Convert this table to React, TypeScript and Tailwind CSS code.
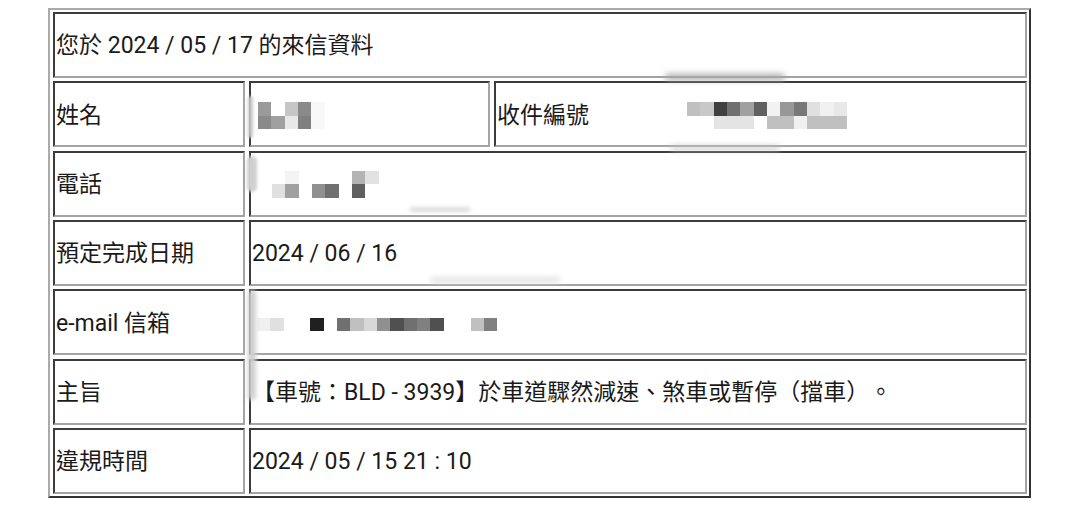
import React from "react";

// pixelated redaction blocks, one class per square ("" = empty)
const nameBlocks: string[][] = [
    ["bg-[#9a9a9a]", "", "bg-[#c6c6c6]", "bg-[#8a8a8a]", "bg-[#f8f8f8]"],
    ["bg-[#8a8a8a]", "bg-[#a0a0a0]", "bg-[#e8e8e8]", "bg-[#808080]", "bg-[#f8f8f8]"],
];

const receiptBlocks: string[][] = [
    ["bg-[#c0c0c0]", "bg-[#c8c8c8]", "bg-[#404040]", "bg-[#707070]", "bg-[#a0a0a0]", "bg-[#606060]", "bg-[#f2f2f2]", "bg-[#989898]", "bg-[#787878]", "bg-[#e0e0e0]", "bg-[#f0f0f0]", "bg-[#e8e8e8]"],
    ["", "", "bg-[#e4e4e4]", "bg-[#e4e4e4]", "bg-[#e4e4e4]", "", "bg-[#c0c0c0]", "bg-[#c0c0c0]", "bg-[#f0f0f0]", "bg-[#c0c0c0]", "bg-[#c0c0c0]", "bg-[#c0c0c0]"],
];

const phoneBlocks: string[][] = [
    ["", "bg-[#f4f4f4]", "", "", "", "", "bg-[#b4b4b4]", "bg-[#e2e2e2]"],
    ["bg-[#e0e0e0]", "bg-[#a0a0a0]", "", "bg-[#909090]", "bg-[#707070]", "", "bg-[#606060]", ""],
];

const emailBlocks: string[][] = [
    ["bg-[#f0f0f0]", "bg-[#e0e0e0]", "", "", "bg-[#202020]", "", "bg-[#707070]", "bg-[#c0c0c0]", "bg-[#d8d8d8]", "bg-[#909090]", "bg-[#505050]", "bg-[#707070]", "bg-[#808080]", "bg-[#505050]", "", "", "bg-[#c0c0c0]", "bg-[#808080]"],
];

const Redacted: React.FC<{ rows: string[][] }> = ({ rows }) => (
    <div className="flex flex-col">
        {rows.map((row, i) => (
            <div key={i} className="flex">
                {row.map((cls, j) => (
                    <div key={j} className={`w-[13.35px] h-[13.35px] ${cls}`} />
                ))}
            </div>
        ))}
    </div>
);

// inset border like an old <td> with border="1"
const cellClass =
    "h-[66px] flex items-center px-[1px] pt-[3px] border-2 border-t-[#3c3c3c] border-l-[#3c3c3c] border-b-[#a4a4a4] border-r-[#a4a4a4] bg-white whitespace-nowrap";

export default function App() {
    return (
        <div className="min-h-[526px] bg-white pl-[48px] pt-[8px] font-['Roboto','Noto_Sans_CJK_TC',sans-serif] text-[23px] text-[#1a1a1a] [text-spacing-trim:space-all]">
            <div className="relative w-[983px] border-2 border-t-[#aaaaaa] border-l-[#aaaaaa] border-b-[#333333] border-r-[#333333] px-[3px] py-[2px]">
                <div className="grid grid-cols-[192px_241px_533px] gap-x-[4px] gap-y-[3.33px]">
                    <div className={`${cellClass} col-span-3`}>您於 2024 / 05 / 17 的來信資料</div>

                    <div className={cellClass}>姓名</div>
                    <div className={`${cellClass} pl-[7px]`}>
                        <Redacted rows={nameBlocks} />
                    </div>
                    <div className={cellClass}>
                        <span className="w-[190px]">收件編號</span>
                        <Redacted rows={receiptBlocks} />
                    </div>

                    <div className={cellClass}>電話</div>
                    <div className={`${cellClass} col-span-2 pl-[21px]`}>
                        <div className="-mt-[2px]">
                            <Redacted rows={phoneBlocks} />
                        </div>
                    </div>

                    <div className={cellClass}>預定完成日期</div>
                    <div className={`${cellClass} col-span-2`}>2024 / 06 / 16</div>

                    <div className={cellClass}>e-mail 信箱</div>
                    <div className={`${cellClass} col-span-2 pl-[6px]`}>
                        <div className="mt-[2px]">
                            <Redacted rows={emailBlocks} />
                        </div>
                    </div>

                    <div className={cellClass}>主旨</div>
                    <div className={`${cellClass} col-span-2`}>【車號：BLD - 3939】於車道驟然減速、煞車或暫停（擋車）。</div>

                    <div className={cellClass}>違規時間</div>
                    <div className={`${cellClass} col-span-2`}>2024 / 05 / 15 21 : 10</div>
                </div>

                {/* smudges left over from the redaction */}
                <div className="absolute left-[198px] top-[86px] w-[5px] h-[42px] rounded-full bg-[#c8c8c8] blur-[1.5px]" />
                <div className="absolute left-[197px] top-[146px] w-[10px] h-[36px] rounded-full bg-[#d0d0d0] blur-[1.5px]" />
                <div className="absolute left-[198px] top-[280px] w-[8px] h-[110px] rounded-full bg-[#cfcfcf] blur-[2px]" />
                <div className="absolute left-[615px] top-[64px] w-[120px] h-[6px] rounded-full bg-[#a8a8a8] blur-[3px]" />
                <div className="absolute left-[620px] top-[136px] w-[110px] h-[4px] rounded-full bg-[#c4c4c4] blur-[3px]" />
                <div className="absolute left-[360px] top-[198px] w-[60px] h-[3px] rounded-full bg-[#c8c8c8] blur-[2px]" />
                <div className="absolute left-[380px] top-[268px] w-[130px] h-[4px] rounded-full bg-[#d4d4d4] blur-[3px]" />
            </div>
        </div>
    );
}
